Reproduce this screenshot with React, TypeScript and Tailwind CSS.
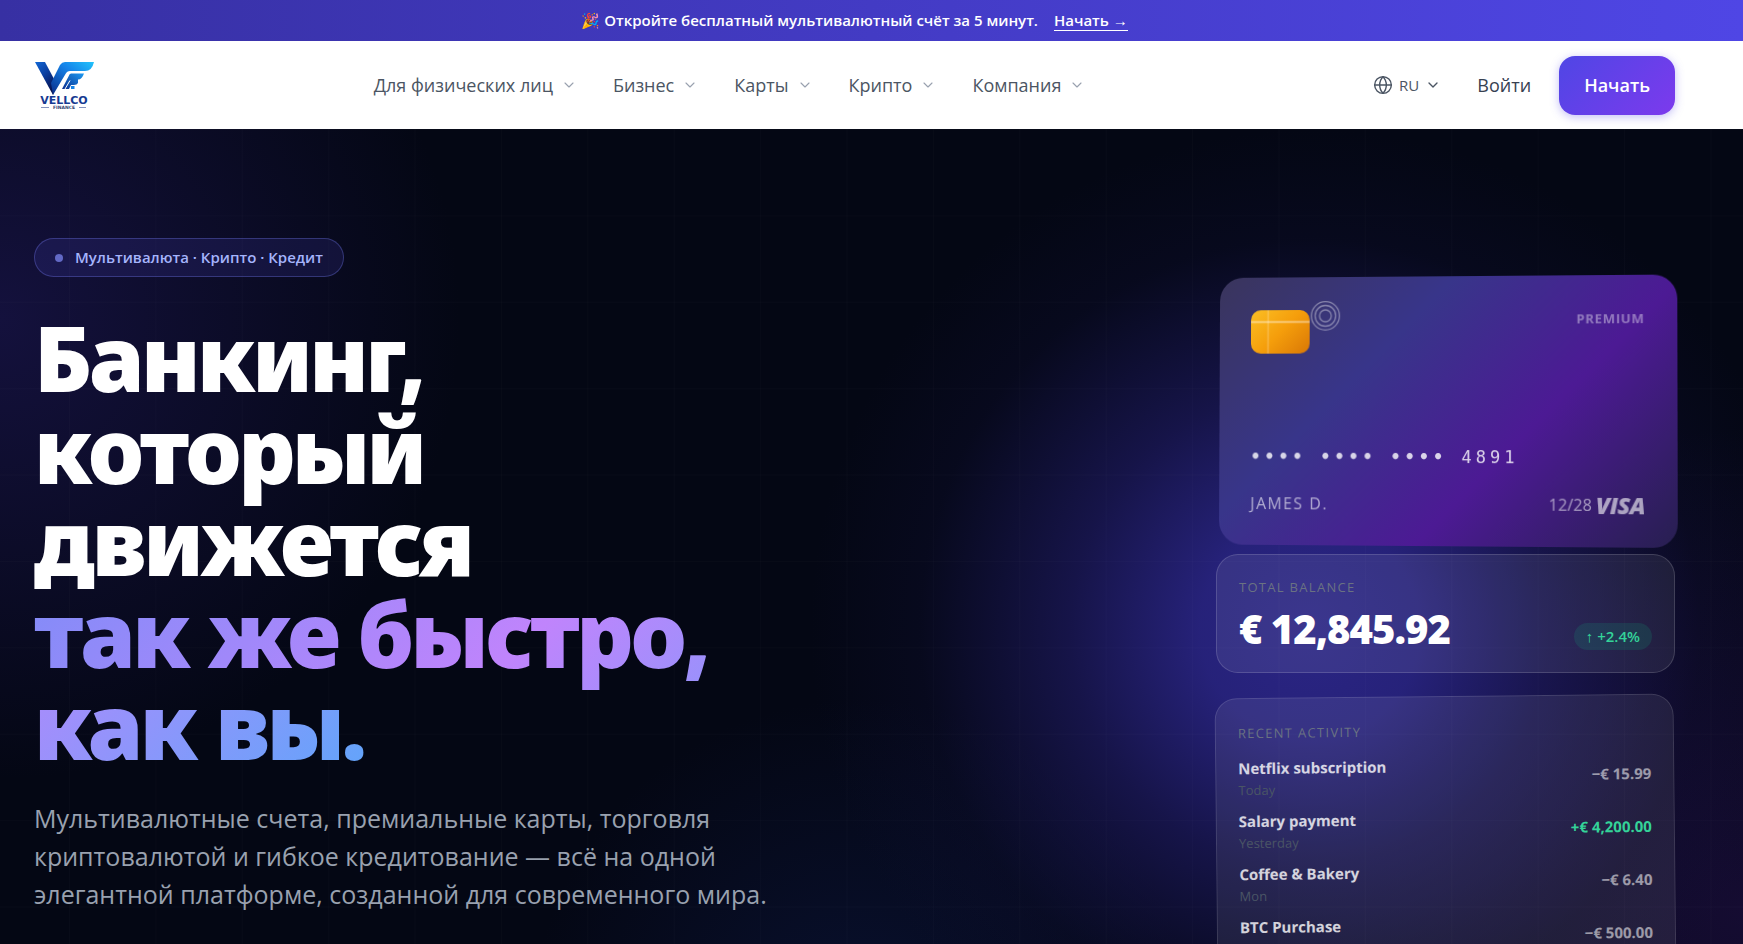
import { ChevronDown, Globe } from "lucide-react";

const navItems = ["Для физических лиц", "Бизнес", "Карты", "Крипто", "Компания"];

const activity = [
  { title: "Netflix subscription", date: "Today", amount: "−€ 15.99", income: false },
  { title: "Salary payment", date: "Yesterday", amount: "+€ 4,200.00", income: true },
  { title: "Coffee & Bakery", date: "Mon", amount: "−€ 6.40", income: false },
  { title: "BTC Purchase", date: "Sun", amount: "−€ 500.00", income: false },
];

function Logo() {
  return (
    <svg viewBox="0 0 60 48" className="h-12 w-[60px]" role="img" aria-label="Vellco Finance">
      <defs>
        <linearGradient id="vLeft" x1="0" y1="0" x2="0.6" y2="1">
          <stop offset="0" stopColor="#1268d6" />
          <stop offset="0.5" stopColor="#0a3d9e" />
          <stop offset="1" stopColor="#06114f" />
        </linearGradient>
        <linearGradient id="vRight" x1="1" y1="0" x2="0" y2="1">
          <stop offset="0" stopColor="#22c3fb" />
          <stop offset="0.4" stopColor="#1584ea" />
          <stop offset="1" stopColor="#0a2a86" />
        </linearGradient>
        <linearGradient id="fArm" x1="1" y1="0" x2="0" y2="1">
          <stop offset="0" stopColor="#1d9af2" />
          <stop offset="1" stopColor="#0a2f90" />
        </linearGradient>
      </defs>
      <path d="M1 1h10l9 17 1 8-2 8z" fill="url(#vLeft)" />
      <path d="M19 34l-2-12 9-18q2-3 5-3h29q-2 9-9 9H36q-3 0-4.500 3z" fill="url(#vRight)" />
      <path d="M37 12.500h13q-2 6-6 6v3.500q-1 2-4 2h-3l-2 4h-7l6.500-12.500q1-3 2.500-3z" fill="url(#fArm)" />
      <path d="M36 19.500l-5 8.500" stroke="#ffffff" strokeWidth="1" />
      <path d="M37 25h3.500v3H37z" fill="#1583e6" />
      <text x="30" y="43" textAnchor="middle" fontSize="11" fontWeight="800" fill="#173a92" fontFamily="'DejaVu Sans', sans-serif">
        VELLCO
      </text>
      <path d="M7 46.500h8M45 46.500h7" stroke="#6678ad" strokeWidth="0.800" />
      <text x="30" y="48" textAnchor="middle" fontSize="4.500" fontWeight="700" fill="#31426f" fontFamily="'DejaVu Sans', sans-serif">
        FINANCE
      </text>
    </svg>
  );
}

function Header() {
  return (
    <header className="flex h-[88px] shrink-0 items-center justify-between bg-white pr-[68px] pl-[34px]">
      <a href="#home">
        <Logo />
      </a>
      <nav className="flex items-center gap-9">
        {navItems.map((item) => (
          <button key={item} type="button" className="flex items-center gap-2 text-lg font-medium text-[#4b5563]">
            {item}
            <ChevronDown className="size-4 text-gray-400" strokeWidth={1.7} />
          </button>
        ))}
      </nav>
      <div className="flex items-center pl-2">
        <button type="button" className="flex items-center gap-1.5 text-[15px] font-medium text-[#4b5563]">
          <Globe className="size-5" strokeWidth={1.7} />
          RU
          <ChevronDown className="size-4" strokeWidth={2} />
        </button>
        <a href="#login" className="ml-9 text-lg font-medium text-[#374151]">
          Войти
        </a>
        <a
          href="#start"
          className="ml-7 flex h-[59px] items-center rounded-2xl bg-[linear-gradient(135deg,#4f46e5,#7c3aed)] px-[25px] text-lg font-semibold text-white shadow-[0_2px_10px_rgba(79,70,229,0.35)]"
        >
          Начать
        </a>
      </div>
    </header>
  );
}

function BankCard() {
  return (
    <div className="flex h-[270px] flex-col rounded-[24px] bg-[linear-gradient(135deg,#3a355c_0%,#38358a_33%,#4c1a94_64%,#271f50_100%)] pt-6 pr-8 pb-6 pl-8 [transform:perspective(1200px)_rotateY(-4deg)_rotateX(1deg)]">
      <div className="flex items-start">
        <div className="mt-[9px] h-11 w-[60px] overflow-hidden rounded-[10px] bg-[linear-gradient(135deg,#fbbf24,#f59e0b_50%,#d97706)]">
          <svg viewBox="0 0 60 44" className="h-full w-full" aria-hidden="true">
            <path d="M0 12h60" stroke="#ffffff" strokeOpacity="0.350" strokeWidth="2.500" />
            <path d="M17.500 0v44" stroke="#ffffff" strokeOpacity="0.250" strokeWidth="1.500" />
          </svg>
        </div>
        <svg viewBox="0 0 32 32" className="size-8" fill="none" stroke="#ffffff" strokeOpacity="0.400" strokeWidth="1.300" aria-hidden="true">
          <circle cx="16" cy="15" r="14.300" />
          <circle cx="16" cy="15" r="10.500" />
          <circle cx="16" cy="15" r="6" />
        </svg>
        <span className="mt-2.5 ml-auto text-[13px] font-bold tracking-wider text-white/40">PREMIUM</span>
      </div>
      <p className="mt-auto font-['DejaVu_Sans_Mono',monospace] text-[17px] tracking-[4px] text-white/80">
        <span className="font-bold">•••• •••• ••••</span> 4891
      </p>
      <div className="mt-5 flex items-center justify-between pb-1">
        <span className="text-base tracking-widest text-white/60">JAMES D.</span>
        <span className="flex items-center gap-1 text-base text-white/55">
          12/28
          <span className="text-[23px] leading-7 font-black tracking-tight text-white/60 italic">VISA</span>
        </span>
      </div>
    </div>
  );
}

function Balance() {
  return (
    <section className="mt-2 h-[119px] rounded-[22px] border border-white/15 bg-white/8 px-[22px] pt-[22px]">
      <h2 className="text-[13px] leading-5 font-medium tracking-widest text-gray-500">TOTAL BALANCE</h2>
      <div className="flex items-end justify-between">
        <p className="mt-2 text-[40px] leading-[48px] font-extrabold tracking-tight text-white">€ 12,845.92</p>
        <span className="mb-[3px] flex h-[27px] items-center rounded-full bg-[#10b981]/15 px-3 text-[15px] font-semibold text-[#34d399]">
          ↑ +2.4%
        </span>
      </div>
    </section>
  );
}

function Activity() {
  return (
    <section className="mt-[23px] -rotate-[0.6deg] rounded-[22px] border border-white/12 bg-white/8 px-[22px] pt-6 pb-6">
      <h2 className="text-[13px] leading-5 font-medium tracking-widest text-gray-500">RECENT ACTIVITY</h2>
      <ul className="mt-2">
        {activity.map((row) => (
          <li key={row.title} className="flex h-[53px] items-center justify-between">
            <div>
              <p className="text-[15px] leading-6 font-bold text-white/80">{row.title}</p>
              <p className="text-[13px] leading-5 text-gray-600">{row.date}</p>
            </div>
            <span className={row.income ? "text-[15px] font-bold text-[#34d399]" : "text-[15px] font-bold text-white/55"}>{row.amount}</span>
          </li>
        ))}
      </ul>
    </section>
  );
}

export default function App() {
  return (
    <div className="flex h-screen flex-col overflow-hidden bg-[#040714] font-['Open_Sans','Noto_Sans',sans-serif]">
      <div className="flex h-[41px] shrink-0 items-center justify-center gap-4 bg-[linear-gradient(90deg,#3730a3,#4f46e5)] pr-[34px] text-[15px] font-semibold text-white">
        <span>🎉 Откройте бесплатный мультивалютный счёт за 5 минут.</span>
        <a href="#start" className="border-b border-white leading-5">
          Начать →
        </a>
      </div>
      <Header />
      <main className="flex min-h-0 grow items-start justify-between overflow-hidden bg-[linear-gradient(to_right,rgba(255,255,255,0.015)_1px,transparent_1px),linear-gradient(to_bottom,rgba(255,255,255,0.015)_1px,transparent_1px),radial-gradient(circle_500px_at_1310px_500px,#2b2585_0%,rgba(41,36,130,0.92)_22%,rgba(34,29,108,0.6)_48%,rgba(20,18,66,0.2)_78%,transparent_100%),radial-gradient(circle_480px_at_1743px_780px,rgba(28,14,62,0.7),transparent),radial-gradient(circle_460px_at_0px_190px,#14113d,transparent),radial-gradient(circle_330px_at_860px_900px,rgba(14,26,74,0.5),transparent)] bg-[size:5.4rem_5.4rem,5.4rem_5.4rem,100%_100%,100%_100%,100%_100%,100%_100%] bg-[position:69px_0px,0px_0px,0_0,0_0,0_0,0_0] pr-[68px] pl-[34px]">
        <div className="pt-[109px]">
          <p className="flex h-[39px] w-fit items-center gap-3 rounded-full border border-indigo-400/30 bg-indigo-500/12 px-[20px] text-[15px] font-semibold text-[#a5b4fc]">
            <span className="size-2 rounded-full bg-[#818cf8]/70" />
            Мультивалюта · Крипто · Кредит
          </p>
          <h1 className="mt-[34px] font-['Noto_Sans','Open_Sans',sans-serif] text-[90px] leading-[92px] font-black tracking-[-0.04em] text-white">
            Банкинг,
            <br />
            который
            <br />
            движется
            <br />
            <span className="bg-[linear-gradient(135deg,#818cf8,#c084fc_50%,#60a5fa)] bg-clip-text text-transparent">
              так же быстро,
              <br />
              как вы.
            </span>
          </h1>
          <p className="mt-7 max-w-[760px] text-[25px] leading-[38px] text-gray-400">
            Мультивалютные счета, премиальные карты, торговля
            <br />
            криптовалютой и гибкое кредитование — всё на одной
            <br />
            элегантной платформе, созданной для современного мира.
          </p>
        </div>
        <aside className="w-[459px] shrink-0 pt-[147px]">
          <BankCard />
          <Balance />
          <Activity />
        </aside>
      </main>
    </div>
  );
}
